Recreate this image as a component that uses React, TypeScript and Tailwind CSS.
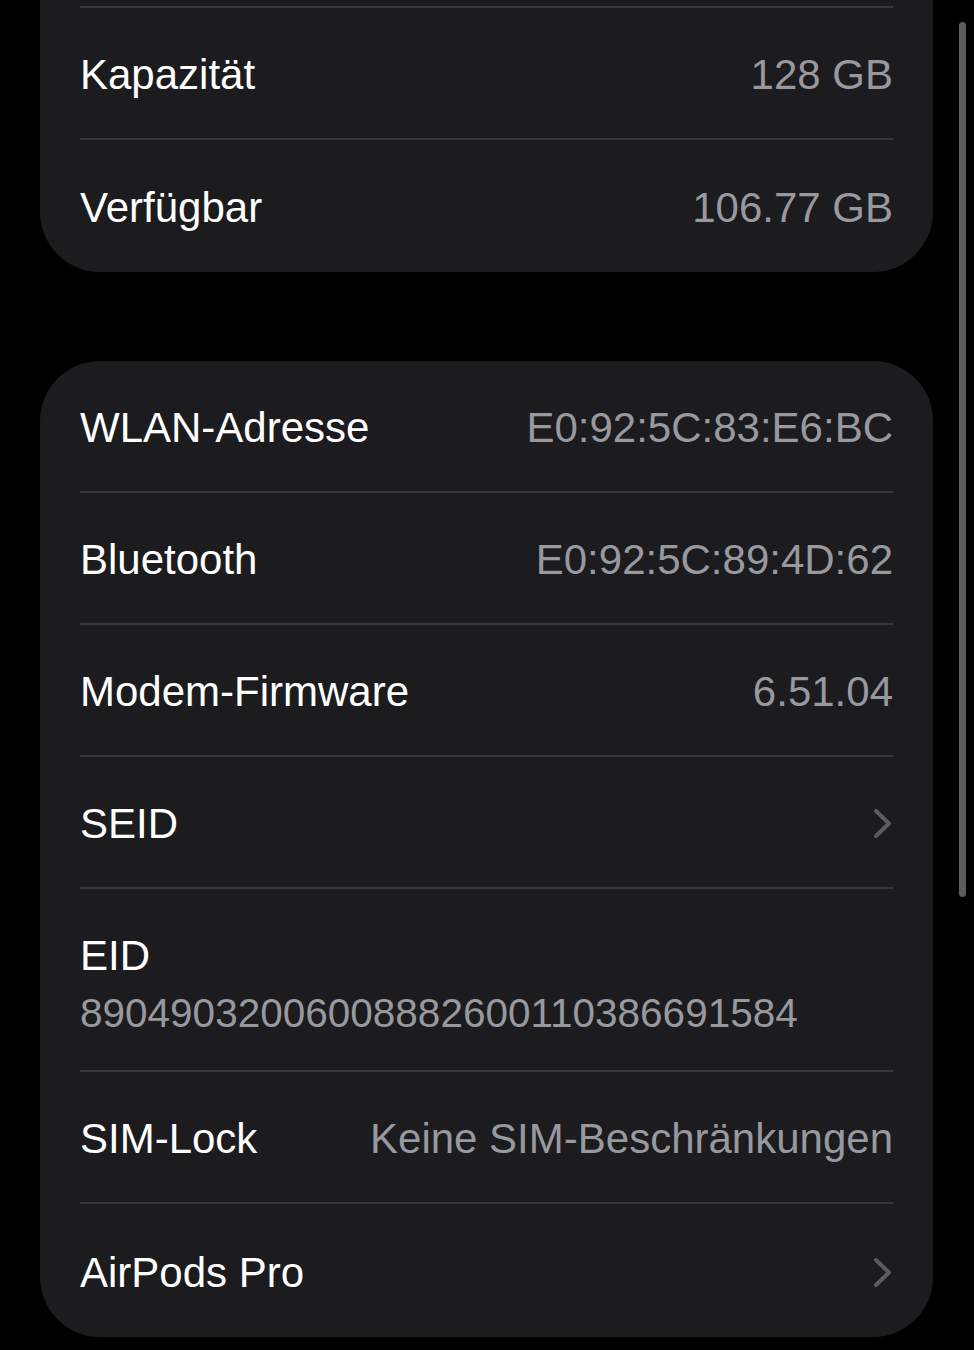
import React from 'react';

interface Row {
  label: string;
  value?: string;
  chevron?: boolean;
  sub?: string;
}

const storageRows: Row[] = [
  { label: 'Kapazität', value: '128 GB' },
  { label: 'Verfügbar', value: '106.77 GB' },
];

const deviceRows: Row[] = [
  { label: 'WLAN-Adresse', value: 'E0:92:5C:83:E6:BC' },
  { label: 'Bluetooth', value: 'E0:92:5C:89:4D:62' },
  { label: 'Modem-Firmware', value: '6.51.04' },
  { label: 'SEID', chevron: true },
  { label: 'EID', sub: '89049032006008882600110386691584' },
  { label: 'SIM-Lock', value: 'Keine SIM-Beschränkungen' },
  { label: 'AirPods Pro', chevron: true },
];

function Chevron() {
  return (
    <svg width="20" height="31" viewBox="0 0 20 31" fill="none">
      <path d="M3 3l13 12.5L3 28" stroke="#5b5b60" strokeWidth={4} strokeLinecap="round" strokeLinejoin="round" />
    </svg>
  );
}

function Separator() {
  return <div className="mx-[40px] h-[2px] bg-[#38383a]" />;
}

function SettingsRow({ row, height = 'h-[130px]' }: { row: Row; height?: string }) {
  // Zeile mit Untertitel (EID)
  if (row.sub) {
    return (
      <div className="h-[181px] px-[40px] pt-[41px] flex flex-col">
        <div className="text-[42px] leading-[52px] text-white">{row.label}</div>
        <div className="text-[40.5px] leading-[62px] text-[#98989f]">{row.sub}</div>
      </div>
    );
  }
  return (
    <div className={`${height} px-[40px] pt-[3px] flex items-center justify-between`}>
      <span className="text-[42px] text-white whitespace-nowrap">{row.label}</span>
      {row.value && <span className="text-[42px] text-[#98989f] whitespace-nowrap">{row.value}</span>}
      {row.chevron && <Chevron />}
    </div>
  );
}

export default function App() {
  return (
    <div
      className="relative h-[1350px] overflow-hidden bg-black"
      style={{ fontFamily: '"Liberation Sans", Arial, sans-serif' }}
    >
      {/* Speicher-Karte, oben abgeschnitten */}
      <div className="ml-[40px] mr-[41px] bg-[#1c1c1e] rounded-b-[60px] pt-[6px]">
        <Separator />
        <SettingsRow row={storageRows[0]} />
        <Separator />
        <SettingsRow row={storageRows[1]} height="h-[132px]" />
      </div>

      {/* Geräte-Karte */}
      <div className="ml-[40px] mr-[41px] mt-[89px] bg-[#1c1c1e] rounded-[60px]">
        {deviceRows.map((row, i) => (
          <div key={row.label}>
            {i > 0 && <Separator />}
            <SettingsRow row={row} height={i === deviceRows.length - 1 ? 'h-[133px]' : 'h-[130px]'} />
          </div>
        ))}
      </div>

      {/* Scroll-Indikator */}
      <div className="absolute left-[959px] top-[22px] w-[7px] h-[875px] rounded-full bg-[#5c5c5e]" />
    </div>
  );
}
